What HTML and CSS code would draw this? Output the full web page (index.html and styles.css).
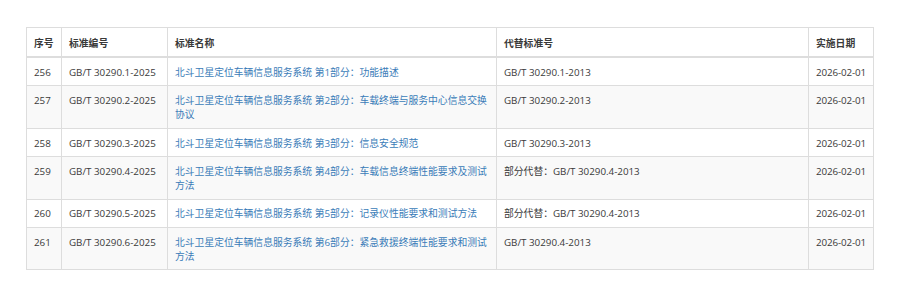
FILE: index.html
```html
<!DOCTYPE html>
<html lang="zh-CN">
<head>
<meta charset="utf-8">
<title>标准列表</title>
<link rel="stylesheet" href="styles.css">
</head>
<body>
<div class="wrap">
  <table class="std-table">
    <colgroup>
      <col class="c-no">
      <col class="c-code">
      <col class="c-name">
      <col class="c-rep">
      <col class="c-date">
    </colgroup>
    <thead>
      <tr>
        <th>序号</th>
        <th>标准编号</th>
        <th>标准名称</th>
        <th>代替标准号</th>
        <th>实施日期</th>
      </tr>
    </thead>
    <tbody>
      <tr>
        <td>256</td>
        <td>GB/T 30290.1-2025</td>
        <td><a href="#">北斗卫星定位车辆信息服务系统 第1部分：功能描述</a></td>
        <td>GB/T 30290.1-2013</td>
        <td class="date">2026-02-01</td>
      </tr>
      <tr>
        <td>257</td>
        <td>GB/T 30290.2-2025</td>
        <td><a href="#">北斗卫星定位车辆信息服务系统 第2部分：车载终端与服务中心信息交换协议</a></td>
        <td>GB/T 30290.2-2013</td>
        <td class="date">2026-02-01</td>
      </tr>
      <tr>
        <td>258</td>
        <td>GB/T 30290.3-2025</td>
        <td><a href="#">北斗卫星定位车辆信息服务系统 第3部分：信息安全规范</a></td>
        <td>GB/T 30290.3-2013</td>
        <td class="date">2026-02-01</td>
      </tr>
      <tr>
        <td>259</td>
        <td>GB/T 30290.4-2025</td>
        <td><a href="#">北斗卫星定位车辆信息服务系统 第4部分：车载信息终端性能要求及测试方法</a></td>
        <td>部分代替：GB/T 30290.4-2013</td>
        <td class="date">2026-02-01</td>
      </tr>
      <tr>
        <td>260</td>
        <td>GB/T 30290.5-2025</td>
        <td><a href="#">北斗卫星定位车辆信息服务系统 第5部分：记录仪性能要求和测试方法</a></td>
        <td>部分代替：GB/T 30290.4-2013</td>
        <td class="date">2026-02-01</td>
      </tr>
      <tr>
        <td>261</td>
        <td>GB/T 30290.6-2025</td>
        <td><a href="#">北斗卫星定位车辆信息服务系统 第6部分：紧急救援终端性能要求和测试方法</a></td>
        <td>GB/T 30290.4-2013</td>
        <td class="date">2026-02-01</td>
      </tr>
    </tbody>
  </table>
</div>
</body>
</html>
```
FILE: styles.css
```css
html, body {
  margin: 0;
  padding: 0;
  background: #fff;
}

.wrap {
  padding: 27px 0 0 26px;
}

.std-table {
  border-collapse: collapse;
  table-layout: fixed;
  width: 847px;
  font-family: "Open Sans", "Noto Sans CJK SC", sans-serif;
  font-size: 9.8px;
  line-height: 14px;
  color: #3a3a3a;
}

.c-no { width: 35px; }
.c-code { width: 106px; }
.c-name { width: 329px; }
.c-rep { width: 312px; }
.c-date { width: 65px; }

.std-table th,
.std-table td {
  border: 1px solid #ddd;
  padding: 7.9px 7px 5.5px;
  text-align: left;
  vertical-align: top;
}

.std-table th {
  font-weight: bold;
  padding-top: 8.5px;
  padding-bottom: 5.5px;
  border-bottom: 2px solid #ddd;
  background: #fff;
}

.std-table td.date {
  white-space: nowrap;
  letter-spacing: -0.1px;
}

.std-table tbody tr:nth-child(even) {
  background: #f9f9f9;
}

.std-table a {
  color: #3a7cb8;
  text-decoration: none;
}
```
